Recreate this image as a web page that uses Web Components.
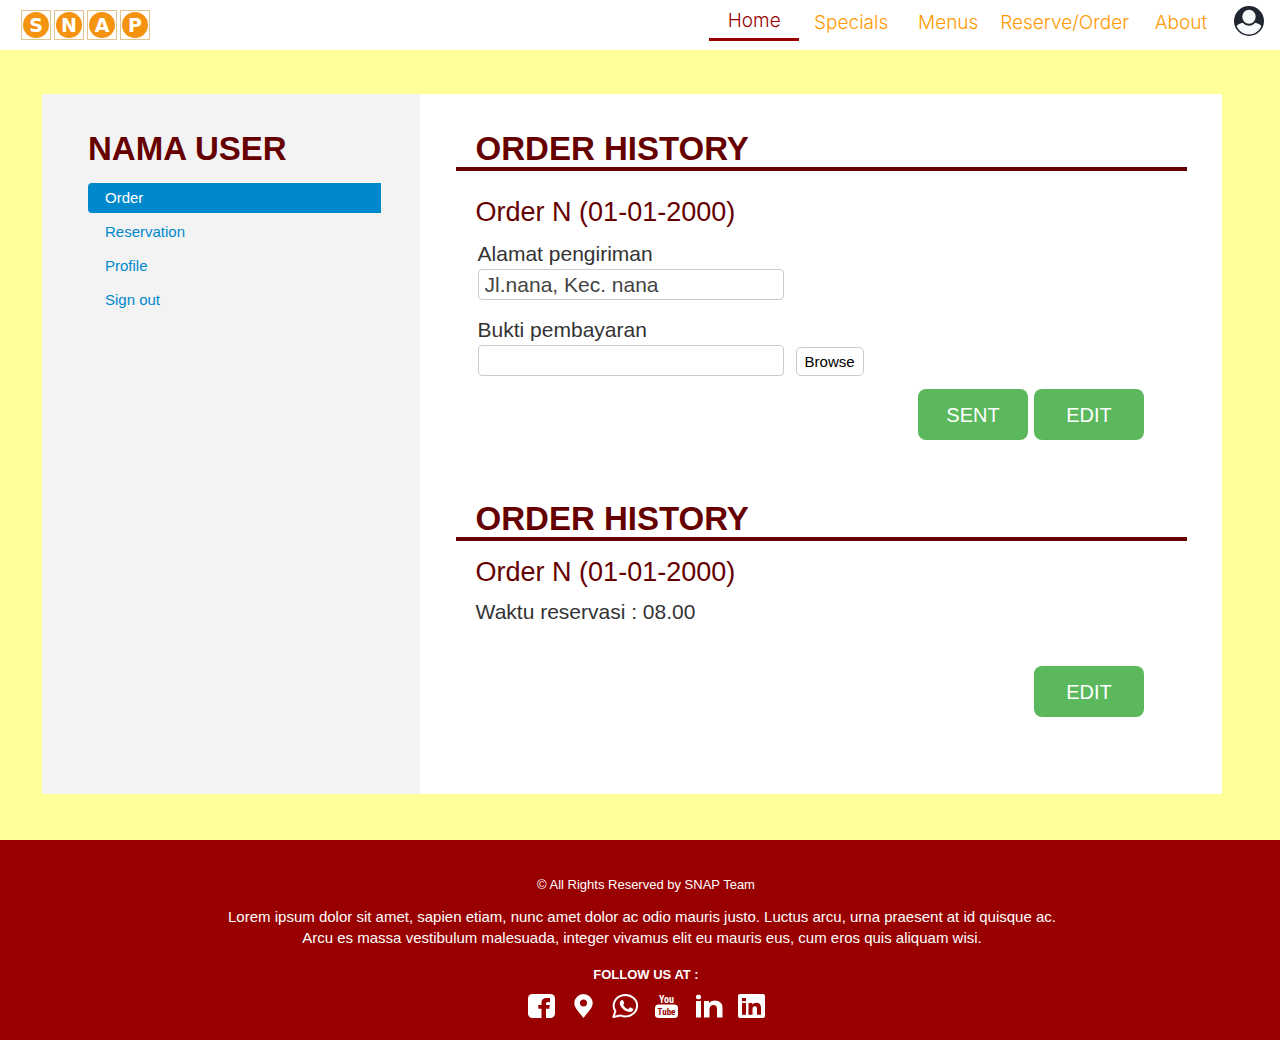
<!DOCTYPE html>
<html lang="id">
<head>
<meta charset="utf-8">
<meta name="viewport" content="width=device-width, initial-scale=1">
<title>SNAP - Order History</title>
<style>
  body { margin: 0; font-family: "Liberation Sans", Arial, sans-serif; color: #333; background: #ffff99; }
</style>
</head>
<body>
<snap-page>
  <snap-header slot="header"></snap-header>
  <snap-sidebar slot="side" heading="NAMA USER"></snap-sidebar>
  <snap-section heading="ORDER HISTORY">
    <snap-order heading="Order N (01-01-2000)" roomy>
      <snap-field label="Alamat pengiriman" value="Jl.nana, Kec. nana"></snap-field>
      <snap-field label="Bukti pembayaran" browse></snap-field>
      <snap-button slot="actions">SENT</snap-button>
      <snap-button slot="actions">EDIT</snap-button>
    </snap-order>
  </snap-section>
  <snap-section heading="ORDER HISTORY">
    <snap-order heading="Order N (01-01-2000)">
      <snap-note>Waktu reservasi : 08.00</snap-note>
      <snap-button slot="actions">EDIT</snap-button>
    </snap-order>
  </snap-section>
  <snap-footer slot="footer"></snap-footer>
</snap-page>

<script>
class SnapElement extends HTMLElement {
  connectedCallback() {
    if (this.shadowRoot) return;
    this.attachShadow({ mode: 'open' }).innerHTML =
      `<style>*{box-sizing:border-box}${this.styles()}</style>${this.markup()}`;
  }
}

customElements.define('snap-page', class extends SnapElement {
  styles() { return `
    :host { display: flex; flex-direction: column; min-height: 100vh; }
    .wrap { flex: 1; padding: 44px 58px 46px 42px; display: flex; }
    .card { flex: 1; display: flex; background: #fff; }
    .side { flex: 0 0 32%; background: #f3f3f3; }
    main { flex: 1; min-width: 0; padding: 37px 35px 77px 36px; display: flex; flex-direction: column; gap: 61px; }`; }
  markup() { return `
    <slot name="header"></slot>
    <div class="wrap"><div class="card">
      <div class="side"><slot name="side"></slot></div>
      <main><slot></slot></main>
    </div></div>
    <slot name="footer"></slot>`; }
});

customElements.define('snap-logo', class extends SnapElement {
  styles() { return `
    :host { display: flex; gap: 3px; }
    span { width: 30px; height: 30px; border: 1px solid #e3c391; background: #fff; display: grid; place-items: center; }
    b { width: 26px; height: 26px; border-radius: 50%; background: #f4930f; color: #fff; text-align: center;
        font: 700 19px/26px "DejaVu Sans", "Liberation Sans", sans-serif; }`; }
  markup() { return [...'SNAP'].map(c => `<span><b>${c}</b></span>`).join(''); }
});

customElements.define('snap-avatar', class extends SnapElement {
  styles() { return `:host { display: block; width: 30px; height: 30px; } svg { display: block; }`; }
  markup() { return `
    <svg width="30" height="30" viewBox="0 0 30 30" role="img" aria-label="Account">
      <clipPath id="c"><circle cx="15" cy="15" r="13.4"/></clipPath>
      <circle cx="15" cy="15" r="15" fill="#20262f"/>
      <g clip-path="url(#c)">
        <path fill="#f8f9fb" d="M1 30V22.500C2.500 19 5.500 17.500 8.800 16.800C12 20.800 18 20.800 21.200 16.800C24.500 17.500 27.500 19 29 22.500V30Z"/>
      </g>
      <ellipse cx="15" cy="10.800" rx="6.700" ry="7" fill="#f8f9fb"/>
    </svg>`; }
});

customElements.define('snap-header', class extends SnapElement {
  styles() { return `
    :host { display: flex; align-items: center; justify-content: space-between; height: 50px; padding: 0 16px 0 21px; background: #fff; }
    .right { display: flex; align-items: center; gap: 8px; padding-bottom: 8px; }
    nav { display: flex; align-items: center; gap: 7px; }
    a { min-width: 90px; text-align: center; white-space: nowrap; font: 300 19px/24px Inter, "Liberation Sans", sans-serif;
        color: #ff9900; text-decoration: none; padding-top: 4px; }
    a.on { color: #990000; padding: 8px 0 5px; border-bottom: 3px solid #990000; }`; }
  markup() { return `
    <snap-logo></snap-logo>
    <div class="right"><nav>
      <a class="on" href="#home">Home</a><a href="#specials">Specials</a><a href="#menus">Menus</a><a href="#reserve">Reserve/Order</a><a href="#about">About</a>
    </nav><snap-avatar></snap-avatar></div>`; }
});

customElements.define('snap-sidebar', class extends SnapElement {
  styles() { return `
    :host { display: block; padding: 37px 39px 37px 46px; }
    h2 { margin: 0 0 16px; font-size: 33px; line-height: 36px; color: #660000; }
    nav { display: flex; flex-direction: column; gap: 4px; }
    a { padding-left: 17px; font-size: 15px; line-height: 30px; color: #0088cc; text-decoration: none; border-radius: 4px 0 0 4px; }
    a.on { background: #0088cc; color: #fff; }`; }
  markup() { return `
    <h2>${this.getAttribute('heading')}</h2>
    <nav><a class="on" href="#order">Order</a><a href="#reservation">Reservation</a><a href="#profile">Profile</a><a href="#signout">Sign out</a></nav>`; }
});

customElements.define('snap-section', class extends SnapElement {
  styles() { return `
    :host { display: block; }
    h2 { margin: 0; padding-left: 20px; font-size: 33px; line-height: 36px; color: #660000; border-bottom: 4px solid #660000; }`; }
  markup() { return `<h2>${this.getAttribute('heading')}</h2><slot></slot>`; }
});

customElements.define('snap-order', class extends SnapElement {
  styles() { return `
    :host { display: block; padding: 15px 43px 0 20px; }
    :host([roomy]) { padding-top: 25px; }
    h3 { margin: 0 0 12px; font-size: 27px; line-height: 32px; font-weight: 400; color: #660000; }
    .body { display: flex; flex-direction: column; gap: 18px; }
    .actions { display: flex; justify-content: flex-end; gap: 6px; margin-top: 42px; }
    :host([roomy]) .actions { margin-top: 13px; }
    :host([roomy]) h3 { margin-bottom: 14px; }`; }
  markup() { return `
    <h3>${this.getAttribute('heading')}</h3>
    <div class="body"><slot></slot></div>
    <div class="actions"><slot name="actions"></slot></div>`; }
});

customElements.define('snap-note', class extends SnapElement {
  styles() { return `:host { display: block; font-size: 21px; line-height: 24px; }`; }
  markup() { return `<slot></slot>`; }
});

customElements.define('snap-field', class extends SnapElement {
  styles() { return `
    :host { display: block; padding-left: 2px; font-size: 21px; line-height: 24px; }
    label { display: block; margin-bottom: 3px; }
    .row { display: flex; align-items: flex-end; gap: 12px; }
    input { width: 306px; height: 31px; border: 1px solid #ccc; border-radius: 4px; padding: 0 6px; font: inherit; color: #444; background: #fff; }
    button { width: 68px; height: 29px; padding: 0; border: 1px solid #ccc; border-radius: 5px; background: #fff; font: 15px/20px "Liberation Sans", Arial, sans-serif; color: #000; }`; }
  markup() { return `
    <label for="f">${this.getAttribute('label')}</label>
    <div class="row"><input id="f" type="text" value="${this.getAttribute('value') || ''}">${this.hasAttribute('browse') ? '<button type="button">Browse</button>' : ''}</div>`; }
});

customElements.define('snap-button', class extends SnapElement {
  styles() { return `
    :host { display: block; }
    button { display: block; width: 110px; height: 51px; border: 0; border-radius: 8px; background: #5cb85c; color: #fff; font: 20px/24px "Liberation Sans", Arial, sans-serif; }`; }
  markup() { return `<button type="button"><slot></slot></button>`; }
});

customElements.define('snap-social', class extends SnapElement {
  styles() { return `
    :host { display: flex; justify-content: center; gap: 15px; }
    a { display: block; } svg { display: block; fill: #fff; }
    text { font-family: "Roboto Condensed", "Open Sans Condensed", "Liberation Sans Narrow", Roboto, sans-serif; font-weight: 700; }`; }
  markup() {
    const icons = [
      ['Facebook', `<rect width="27" height="24" rx="4.500"/><path fill="#990000" d="M13.500 24V14.800H10.300V11H13.500V8.800Q13.500 4 18.500 4H22V8H19.800Q18 8 18 9.600V11H21.800L21.300 14.800H18V24Z"/>`],
      ['Location', `<path fill-rule="evenodd" d="M13.500 0A9.200 9.200 0 0 1 22.700 9.200C22.700 14 17 19 13.500 24C10 19 4.300 14 4.300 9.200A9.200 9.200 0 0 1 13.500 0ZM13.500 5.500A3.500 3.500 0 1 0 13.500 12.500A3.500 3.500 0 1 0 13.500 5.500Z"/>`],
      ['WhatsApp', `<path d="M1.300 23L3.400 17.300A11.700 10.700 0 1 1 8.400 21.400Z" fill="none" stroke="#fff" stroke-width="2" stroke-linejoin="round"/><path d="M9.300 6.200Q10.600 5.700 11.200 6.700L12.200 8.900Q12.400 9.600 11.100 10.900Q13 14 16.200 15.200L17.800 13.600Q18.300 13.200 18.900 13.600L21 14.700Q21.600 15.200 21.200 16.100Q20.200 18.200 17.700 18Q10.800 17.200 7.800 10.500Q7.100 7.600 9.300 6.200Z"/>`],
      ['YouTube', `<text x="12.500" y="9" font-size="10" text-anchor="middle">You</text><rect x="1" y="10.500" width="23" height="13.500" rx="3.500"/><text x="12.500" y="20.500" font-size="9" text-anchor="middle" fill="#990000">Tube</text>`],
      ['LinkedIn', `<rect y=".8" width="5" height="4.400" rx="1.800"/><path d="M0 7H5V23.500H0ZM8 7H13V9Q15 6.500 18.500 6.500Q26.500 6.500 26.500 14V23.500H21V15Q21 11 17.500 11Q13.500 11 13.500 15.500V23.500H8Z"/>`],
      ['LinkedIn page', `<path fill-rule="evenodd" d="M2 0H25Q27 0 27 2V22Q27 24 25 24H2Q0 24 0 22V2Q0 0 2 0ZM4 4V7.300H8V4ZM4 9V20.800H8V9ZM10.500 9V20.800H14.500V15Q14.500 12.200 16.800 12.200Q19 12.200 19 15V20.800H23V14Q23 8.700 18.200 8.700Q15.800 8.700 14.300 10.600V9Z"/>`]
    ];
    return icons.map(([n, p]) => `<a href="#" aria-label="${n}"><svg width="27" height="24" viewBox="0 0 27 24">${p}</svg></a>`).join('');
  }
});

customElements.define('snap-footer', class extends SnapElement {
  styles() { return `
    :host { display: block; padding: 37px 0 22px 12px; background: #990000; color: #fff; text-align: center; }
    p { margin: 0; }
    .copy { font-size: 13px; line-height: 16px; }
    .about { margin: 13px 0 19px; padding-right: 8px; font-size: 15px; line-height: 21px; }
    .follow { margin-bottom: 11px; font-size: 13px; line-height: 16px; font-weight: 700; }`; }
  markup() { return `
    <p class="copy">© All Rights Reserved by SNAP Team</p>
    <p class="about">Lorem ipsum dolor sit amet, sapien etiam, nunc amet dolor ac odio mauris justo. Luctus arcu, urna praesent at id quisque ac.<br>Arcu es massa vestibulum malesuada, integer vivamus elit eu mauris eus, cum eros quis aliquam wisi.</p>
    <p class="follow">FOLLOW US AT :</p>
    <snap-social></snap-social>`; }
});
</script>
</body>
</html>
